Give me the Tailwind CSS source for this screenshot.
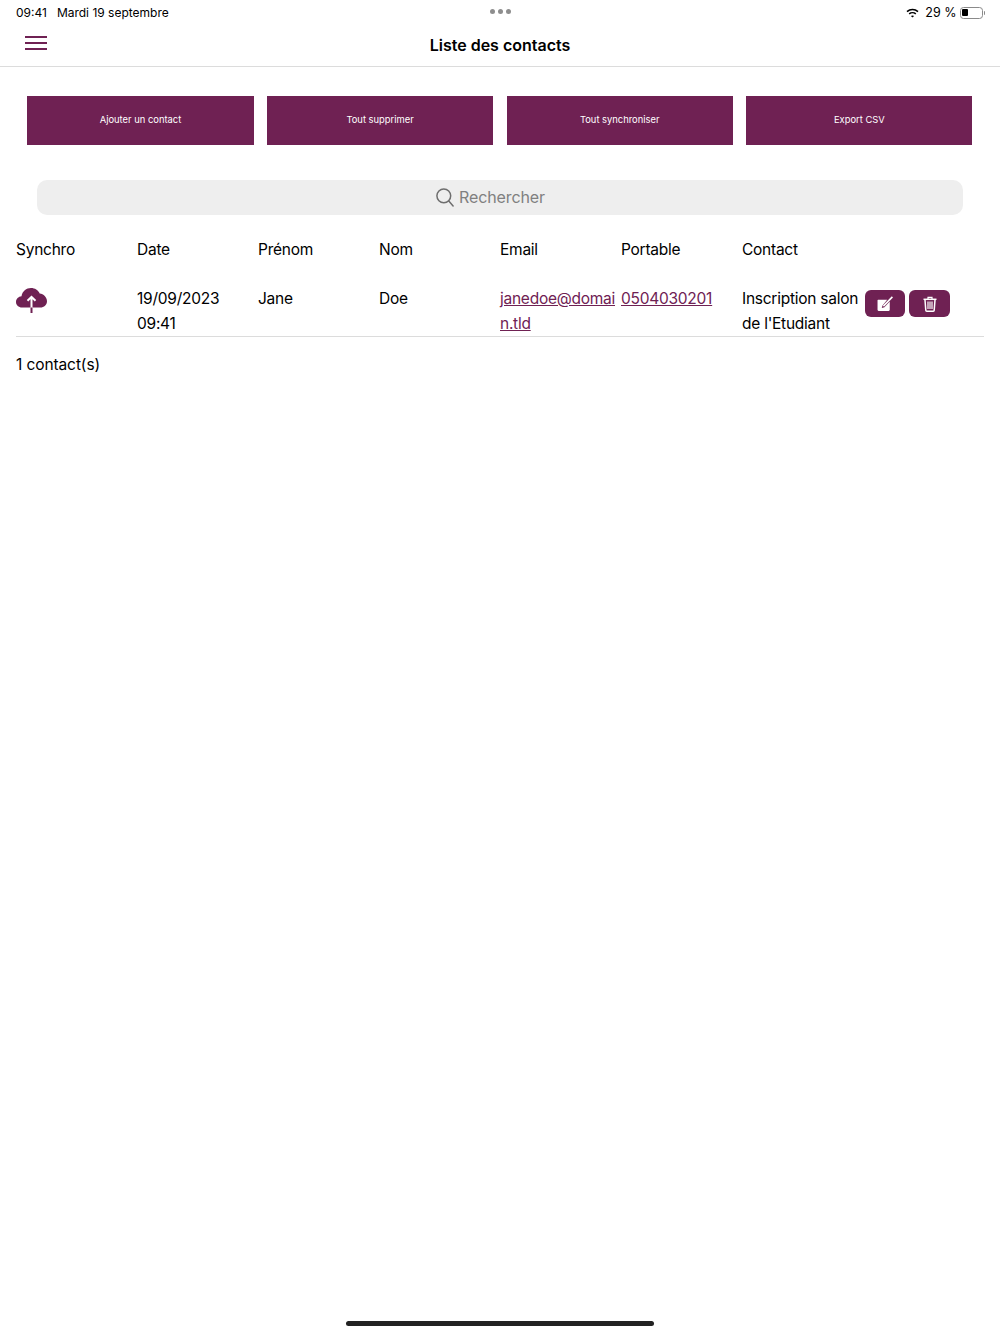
<!DOCTYPE html>
<html lang="fr">
<head>
<meta charset="utf-8">
<script src="https://cdn.jsdelivr.net/npm/@tailwindcss/browser@4"></script>
</head>
<body class="bg-white font-['Inter','Liberation_Sans',sans-serif] text-black">
<div class="relative w-[1000px] h-[1334px] overflow-hidden flex flex-col">
  <header class="h-[67px] border-b border-[#dcdcdc] flex flex-col shrink-0">
    <div class="relative h-[24px] flex items-center justify-between pl-4 pr-[15px] text-[12px] font-normal pt-[1px]">
      <div class="flex gap-[10px]"><span>09:41</span><span>Mardi 19 septembre</span></div>
      <div class="absolute left-[490px] top-[9px] flex gap-[3px]">
        <span class="w-[5px] h-[5px] rounded-full bg-[#8e8e8e]"></span>
        <span class="w-[5px] h-[5px] rounded-full bg-[#8e8e8e]"></span>
        <span class="w-[5px] h-[5px] rounded-full bg-[#8e8e8e]"></span>
      </div>
      <div class="flex items-center gap-[3px]">
        <svg class="mr-[3px]" width="13" height="10" viewBox="0 0 13 10" fill="none" stroke="#000" stroke-width="1.6"><path d="M1 3.600C4.200 .8 8.800 .8 12 3.600"/><path d="M3.200 5.800C5 4.300 8 4.300 9.800 5.800"/><path d="M6.500 9.600 4.900 7.900C5.800 7.200 7.200 7.200 8.100 7.900Z" fill="#000" stroke="none"/></svg>
        <span class="text-[12.5px] leading-none pt-[1px]">29 %</span>
        <div class="flex items-center">
          <div class="w-[23px] h-[12px] rounded-[3.5px] border border-[#8a8a8a] p-[1.5px]"><div class="w-[6px] h-full rounded-[1px] bg-black"></div></div>
          <div class="w-[1.5px] h-[4px] bg-[#8a8a8a] rounded-r-sm ml-[1px]"></div>
        </div>
      </div>
    </div>
    <div class="relative flex-1 flex items-center justify-center">
      <button class="absolute left-[25px] top-[12px] w-[22px] h-[14px] flex flex-col justify-between">
        <span class="block w-full h-[2px] bg-[#6f2153]"></span>
        <span class="block w-full h-[2px] bg-[#6f2153]"></span>
        <span class="block w-full h-[2px] bg-[#6f2153]"></span>
      </button>
      <h1 class="text-[16px] font-semibold leading-none mt-[-1px]">Liste des contacts</h1>
    </div>
  </header>

  <div class="grid grid-cols-4 gap-[13.5px] pl-[27.4px] pr-[27.6px] mt-[29px]">
    <button class="h-[49px] bg-[#6f2153] text-white text-[9.4px]">Ajouter un contact</button>
    <button class="h-[49px] bg-[#6f2153] text-white text-[9.4px]">Tout supprimer</button>
    <button class="h-[49px] bg-[#6f2153] text-white text-[9.4px]">Tout synchroniser</button>
    <button class="h-[49px] bg-[#6f2153] text-white text-[9.4px]">Export CSV</button>
  </div>

  <div class="ml-[37px] mr-[37px] mt-[35px] h-[35px] rounded-[10px] bg-[#eeeeee] flex items-center justify-center gap-[5px] pr-[19px] text-[#808080] text-[16px] tracking-[-0.1px]">
    <svg width="18" height="19" viewBox="0 0 18 19" fill="none" stroke="#6e6e6e" stroke-width="1.5" stroke-linecap="round"><circle cx="7.800" cy="7.800" r="6.900"/><path d="m12.800 13 4.300 4.900"/></svg>
    <span class="mt-[-1px]">Rechercher</span>
  </div>

  <div class="mx-4 mt-[22px] grid grid-cols-[repeat(8,121px)] text-[15.5px] tracking-[-0.25px] leading-[25px]">
    <div class="h-[25px]">Synchro</div>
    <div>Date</div>
    <div>Prénom</div>
    <div>Nom</div>
    <div>Email</div>
    <div>Portable</div>
    <div>Contact</div>
    <div></div>
  </div>

  <div class="mx-4 mt-[24px] h-[51px] border-b border-[#dcdcdc] grid grid-cols-[repeat(8,121px)] text-[15.5px] tracking-[-0.25px] leading-[25px]">
    <div>
      <svg class="mt-[1px]" width="31" height="26" viewBox="0 0 31 26"><path fill="#6f2153" d="M6 20.500C2.700 20.500 0 18.100 0 15c0-3 2.400-5.400 5.500-5.700C6.300 4.200 10.300 1 15 1c3.900 0 7.200 2.100 8.700 5.600 3.900.4 7.300 3.900 7.300 7.600 0 3.600-3 6.300-6.700 6.300Z"/><path fill="none" stroke="#fff" stroke-width="2" d="M15.500 21V10.500M11.500 13.800l4-4 4 4"/><path stroke="#6f2153" stroke-width="2" d="M15.500 20.500V26"/></svg>
    </div>
    <div class="pr-2">19/09/2023<br>09:41</div>
    <div>Jane</div>
    <div>Doe</div>
    <div class="pr-[5px] break-all"><a href="#" class="text-[#6f2153] underline">janedoe@domain.tld</a></div>
    <div class="pr-1"><a href="#" class="text-[#6f2153] underline">0504030201</a></div>
    <div class="whitespace-nowrap">Inscription salon<br>de l'Etudiant</div>
    <div class="flex gap-[4px] pl-[2px] pt-[4px] items-start">
      <button class="w-[40px] h-[27px] rounded-[6px] bg-[#6f2153] flex items-center justify-center">
        <svg width="17" height="16" viewBox="0 0 16 15"><path fill="#fff" d="M1 3.500h8.600L5.200 8.800 4.500 11.300l2.500-.8 5-5.400V13a1 1 0 0 1-1 1H1.500a1 1 0 0 1-1-1V4a.6.6 0 0 1 .5-.5Z"/><path stroke="#fff" stroke-width="1.500" d="M6 9.500 14.500.8"/></svg>
      </button>
      <button class="w-[41px] h-[27px] rounded-[6px] bg-[#6f2153] flex items-center justify-center">
        <svg width="14" height="16" viewBox="0 0 14 16" fill="none" stroke="#fff"><path stroke-width="1.500" d="M.5 3.300h13"/><path stroke-width="1.200" d="M5 3V1.300h4V3"/><path stroke-width="1.500" d="M2 4l.8 10.200c0 .7.500 1 1 1h6.400c.5 0 1-.3 1-1L12 4"/><path stroke-width="1.200" d="M5 5.500v7.500M7 5.500v7.500M9 5.500v7.500"/></svg>
      </button>
    </div>
  </div>

  <p class="mx-4 mt-[15px] text-[15.5px] tracking-[-0.1px] leading-[25px]">1 contact(s)</p>

  <div class="absolute left-[346px] top-[1321px] w-[308px] h-[5px] rounded-full bg-[#222222]"></div>
</div>
</body>
</html>
